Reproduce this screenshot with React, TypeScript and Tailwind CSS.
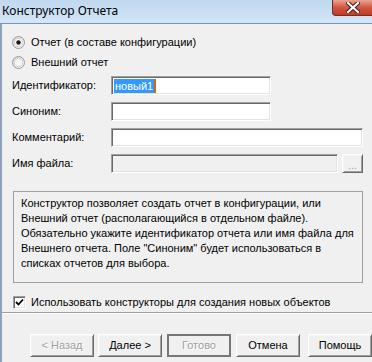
import React from "react";

const sunken =
  "border border-t-[#a0a0a0] border-l-[#a0a0a0] border-r-white border-b-white shadow-[inset_1px_1px_0_#696969,inset_-1px_-1px_0_#e3e3e3]";
const raised =
  "border border-t-white border-l-white border-r-[#696969] border-b-[#696969] shadow-[inset_1px_1px_0_#f4f4f4,inset_-1px_-1px_0_#a0a0a0]";

function Radio({ checked, label }: { checked?: boolean; label: string }) {
  return (
    <div className="flex items-center h-[20px] pl-[10px]">
      <svg width="13" height="13" viewBox="0 0 13 13">
        <defs>
          <linearGradient id={checked ? "rg1" : "rg2"} x1="0" y1="0" x2="1" y2="1">
            <stop offset="0" stopColor="#d6d6d6" />
            <stop offset="1" stopColor="#ffffff" />
          </linearGradient>
        </defs>
        <circle cx="6.5" cy="6.5" r="6" fill={`url(#${checked ? "rg1" : "rg2"})`} stroke="#9a9a9a" />
        <circle cx="6.5" cy="6.5" r="4.2" fill="#f4f4f4" stroke="#c8c8c8" strokeWidth="0.8" />
        {checked && <circle cx="6.5" cy="6.5" r="2.2" fill="#1a1a1a" />}
      </svg>
      <span className="ml-[6px]">{label}</span>
    </div>
  );
}

function Field({
  label,
  width,
  children,
  disabled,
}: {
  label: string;
  width: string;
  children?: React.ReactNode;
  disabled?: boolean;
}) {
  return (
    <div className="flex items-center h-[19px]">
      <span className="w-[109px] pl-[10px] shrink-0">{label}</span>
      <div className={`${width} h-[19px] ${sunken} ${disabled ? "bg-[#f0f0f0]" : "bg-white"} flex items-center pl-[2px]`}>
        {children}
      </div>
    </div>
  );
}

function Btn({ label, disabled, isDefault }: { label: string; disabled?: boolean; isDefault?: boolean }) {
  return (
    <div
      className={`w-[64px] h-[23px] flex items-center justify-center ${
        isDefault ? "border-2 border-[#777]" : raised
      } ${disabled ? "text-[#a0a0a0] [text-shadow:1px_1px_0_#fff]" : "text-black"}`}
    >
      {label}
    </div>
  );
}

export default function App() {
  return (
    <div className="w-[372px] h-[362px] bg-[#f0f0f0] flex flex-col overflow-hidden font-['Liberation_Sans',Arial,sans-serif] text-[11px] text-black">
      <div className="h-[23px] shrink-0 bg-gradient-to-b from-[#c0d8f0] to-[#d4e6f8] flex items-start justify-between">
        <span className="text-[12px] pl-[2px] pt-[4px] font-['Noto_Sans',sans-serif] leading-[14px]">Конструктор Отчета</span>
        <div className="w-[40px] h-[16px] rounded-bl-[4px] border border-t-0 border-r-0 border-[#7a2a20] bg-gradient-to-b from-[#e8a393] via-[#d0563f] to-[#c23a22] flex items-center justify-center">
          <svg width="14" height="11" viewBox="0 0 14 11">
            <path d="M2 1 L12 10 M12 1 L2 10" stroke="#3a1a14" strokeWidth="4" strokeLinecap="square" />
            <path d="M2 1 L12 10 M12 1 L2 10" stroke="#ffffff" strokeWidth="2.2" strokeLinecap="square" />
          </svg>
        </div>
      </div>
      <div className="h-px shrink-0 bg-[#7d93aa]" />
      <div className="flex-1 flex flex-col border-l-2 border-l-[#8ea3b9]">
        <div className="pt-[8px]">
          <Radio checked label="Отчет (в составе конфигурации)" />
          <Radio label="Внешний отчет" />
        </div>
        <div className="mt-[4px] flex flex-col gap-[7px]">
          <Field label="Идентификатор:" width="w-[160px]">
            <span className="bg-[#3399ff] text-white leading-[14px] px-[1px]">новый1</span>
            <span className="w-[2px] h-[14px] bg-[#c86a10]" />
          </Field>
          <Field label="Синоним:" width="w-[160px]" />
          <Field label="Комментарий:" width="w-[252px]" />
          <div className="flex items-center">
            <Field label="Имя файла:" width="w-[227px]" disabled />
            <div className={`ml-[4px] w-[21px] h-[19px] ${raised} flex items-end justify-center pb-[3px] text-[#a0a0a0] leading-[8px]`}>
              ...
            </div>
          </div>
        </div>
        <div className="mt-[18px] ml-[11px] w-[350px] h-[92px] border border-[#a0a0a0] pl-[7px] pr-[2px] pt-[4px] leading-[15px] whitespace-nowrap">
          Конструктор позволяет создать отчет в конфигурации, или
          <br />
          Внешний отчет (располагающийся в отдельном файле).
          <br />
          Обязательно укажите идентификатор отчета или имя файла для
          <br />
          Внешнего отчета. Поле "Синоним" будет использоваться в
          <br />
          списках отчетов для выбора.
        </div>
        <div className="mt-[13px] flex items-center pl-[11px] h-[13px]">
          <div className={`w-[13px] h-[13px] bg-white ${sunken} flex items-center justify-center`}>
            <svg width="9" height="9" viewBox="0 0 9 9">
              <path d="M1 4 L3.5 6.5 L8 1.5" stroke="#000" strokeWidth="1.8" fill="none" />
            </svg>
          </div>
          <span className="ml-[5px]">Использовать конструкторы для создания новых объектов</span>
        </div>
        <div className="mt-[3px] h-[2px] border-t border-t-[#a0a0a0] border-b border-b-white" />
        <div className="mt-[20px] flex pl-[28px]">
          <Btn label="< Назад" disabled />
          <div className="ml-[4px]">
            <Btn label="Далее >" />
          </div>
          <div className="ml-[5px]">
            <Btn label="Готово" disabled isDefault />
          </div>
          <div className="ml-[5px]">
            <Btn label="Отмена" />
          </div>
          <div className="ml-[8px]">
            <Btn label="Помощь" />
          </div>
        </div>
      </div>
    </div>
  );
}
